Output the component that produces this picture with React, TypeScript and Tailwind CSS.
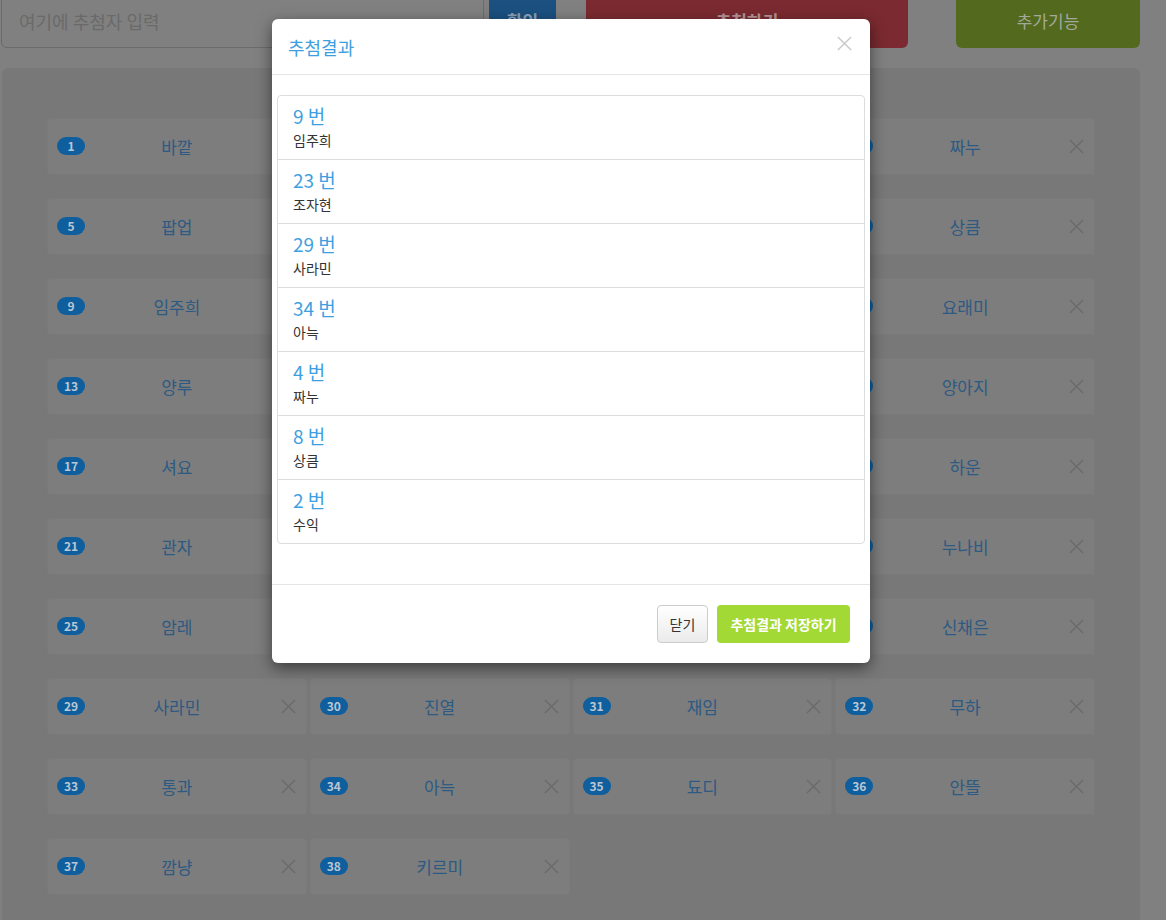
const names = [
  '바깥', '수익', '해랑', '짜누',
  '팝업', '미르', '다온', '상큼',
  '임주희', '가람', '소담', '요래미',
  '양루', '하람', '벼리', '양아지',
  '셔요', '나래', '예솔', '하운',
  '관자', '온새', '조자현', '누나비',
  '암레', '라온', '아름', '신채은',
  '사라민', '진열', '재임', '무하',
  '통과', '아늑', '됴디', '안뜰',
  '깜냥', '키르미',
]

const results = [
  { no: 9, name: '임주희' },
  { no: 23, name: '조자현' },
  { no: 29, name: '사라민' },
  { no: 34, name: '아늑' },
  { no: 4, name: '짜누' },
  { no: 8, name: '상큼' },
  { no: 2, name: '수익' },
]

function Cross({ className }: { className: string }) {
  return (
    <svg viewBox="0 0 16 16" className={className} fill="none" stroke="currentColor" strokeWidth={1.5}>
      <path d="M1 1 L15 15 M15 1 L1 15" />
    </svg>
  )
}

function Card({ no, name }: { no: number; name: string }) {
  return (
    <div className="h-[57px] flex items-center pl-[9px] pr-[10px] bg-[#7d7d7d] border border-[#7a7a7a] rounded-[3px]">
      <span className="w-[28px] h-[18px] -mt-[2px] rounded-full bg-[#0f5e9d] text-[#b9c6d3] text-[12px] font-bold leading-[18px] text-center">
        {no}
      </span>
      <span className="flex-1 pr-[12px] text-center text-[17px] text-[#2d5a82]">{name}</span>
      <Cross className="w-[15px] h-[15px] text-[#6a6a6a]" />
    </div>
  )
}

export default function App() {
  return (
    <div className="relative min-h-[920px] bg-[#808080] overflow-hidden font-['Noto_Sans_CJK_KR','Noto_Sans',sans-serif]">
      {/* top bar */}
      <div className="-mt-[6px] h-[54px] flex pl-[1px]">
        <div className="w-[483px] h-full rounded-md border border-[#6b6b6b] flex items-center pl-[17px] text-[18px] text-[#6a6a6a]">
          여기에 추첨자 입력
        </div>
        <div className="ml-[5px] w-[67px] h-full rounded-md bg-[#1b5080] flex items-center justify-center text-[17px] font-bold text-[#8ba2b8]">
          확인
        </div>
        <div className="ml-[30px] w-[322px] h-full rounded-md bg-[#7a2a30] flex items-center justify-center text-[17px] font-bold text-[#b69597]">
          추첨하기
        </div>
        <div className="ml-[48px] w-[184px] h-full rounded-md bg-[#536a1e] flex items-center justify-center text-[17px] text-[#a3a99b]">
          추가기능
        </div>
      </div>

      {/* participant panel */}
      <div className="mt-[20px] ml-[2px] w-[1138px] min-h-[860px] rounded-md bg-[#787878] pt-[50px] px-[45px] pb-[30px]">
        <div className="grid grid-cols-4 gap-x-[3px] gap-y-[23px]">
          {names.map((n, i) => (
            <Card key={i} no={i + 1} name={n} />
          ))}
        </div>
      </div>

      {/* result modal */}
      <div className="absolute left-[272px] top-[19px] w-[598px] bg-white rounded-md shadow-[0_5px_15px_rgba(0,0,0,0.5)]">
        <div className="h-[56px] border-b border-[#e5e5e5] flex items-center justify-between pl-[16px] pr-[18px]">
          <h4 className="text-[18px] text-[#3e9fe0] leading-none">추첨결과</h4>
          <Cross className="w-[15px] h-[15px] text-[#c8c8c8] -mt-[6px]" />
        </div>
        <div className="pt-[20px] px-[5px] pb-[40px]">
          <ul className="border border-[#dddddd] rounded-[4px]">
            {results.map((r, i) => (
              <li key={i} className={`px-[15px] py-[10px] ${i > 0 ? 'border-t border-[#dddddd]' : ''}`}>
                <div className="text-[19px] leading-[20px] text-[#3e9fe0]">{r.no} 번</div>
                <div className="mt-[5px] text-[14px] leading-[18px] text-[#333333]">{r.name}</div>
              </li>
            ))}
          </ul>
        </div>
        <div className="border-t border-[#e5e5e5] pt-[20px] pb-[20px] pr-[20px] flex justify-end gap-[9px]">
          <button className="w-[51px] h-[38px] rounded-[4px] border border-[#cccccc] bg-gradient-to-b from-white to-[#ebebeb] text-[14px] text-[#333333]">
            닫기
          </button>
          <button className="w-[133px] h-[38px] rounded-[4px] bg-[#a3d935] text-[14px] font-bold text-white">
            추첨결과 저장하기
          </button>
        </div>
      </div>
    </div>
  )
}
